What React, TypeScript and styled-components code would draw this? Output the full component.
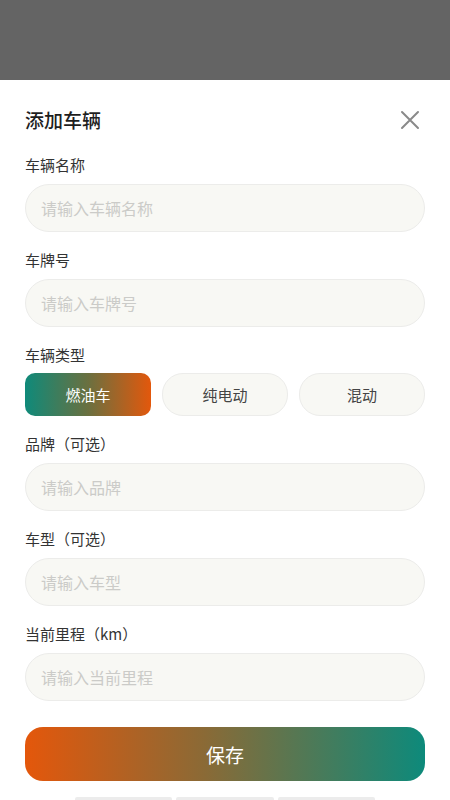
import styled, { createGlobalStyle } from "styled-components";

const GlobalStyle = createGlobalStyle`
  html, body {
    margin: 0;
    padding: 0;
    background: #646464;
    font-family: "Noto Sans CJK SC", "Noto Sans", sans-serif;
  }
  * { box-sizing: border-box; }
`;

const Page = styled.div`
  width: 450px;
  height: 800px;
  overflow: hidden;
  display: flex;
  flex-direction: column;
`;

const Backdrop = styled.div`
  height: 80px;
  flex-shrink: 0;
  background: #646464;
`;

const Sheet = styled.div`
  flex: 1;
  background: #fff;
  padding: 28px 25px 0;
  display: flex;
  flex-direction: column;
`;

const Header = styled.div`
  display: flex;
  align-items: center;
  justify-content: space-between;
  height: 24px;
  margin-bottom: 23px;
`;

const Title = styled.h1`
  margin: 0;
  font-size: 19px;
  font-weight: 500;
  color: #1e1e1e;
  line-height: 24px;
`;

const Close = styled.button`
  border: 0;
  background: none;
  padding: 0;
  margin-right: 4px;
  width: 22px;
  height: 22px;
  display: flex;
  align-items: center;
  justify-content: center;
  cursor: pointer;
`;

const Field = styled.div<{ $gap?: number }>`
  display: flex;
  flex-direction: column;
  gap: ${(p) => p.$gap ?? 9}px;
  margin-bottom: 18px;
`;

const Label = styled.label`
  font-size: 15px;
  line-height: 20px;
  color: #333;
`;

const Input = styled.input`
  height: 48px;
  width: 100%;
  border-radius: 24px;
  border: 1px solid #ececea;
  background: #f8f8f4;
  padding: 0 15px;
  font-family: inherit;
  font-size: 16px;
  color: #333;
  outline: none;
  &::placeholder {
    color: #cbcbc8;
  }
`;

const TypeRow = styled.div`
  display: grid;
  grid-template-columns: repeat(3, 1fr);
  gap: 11px;
`;

const TypeButton = styled.button<{ $active?: boolean }>`
  height: 43px;
  border-radius: ${(p) => (p.$active ? "10px" : "21px")};
  border: ${(p) => (p.$active ? "0" : "1px solid #ececea")};
  background: ${(p) =>
    p.$active ? "linear-gradient(90deg, #0f8a7a 0%, #6a7040 50%, #e3580c 100%)" : "#f8f8f4"};
  color: ${(p) => (p.$active ? "#fff" : "#444")};
  font-family: inherit;
  font-size: 15px;
  cursor: pointer;
`;

const SaveButton = styled.button`
  margin-top: 8px;
  height: 54px;
  width: 100%;
  border: 0;
  border-radius: 18px;
  background: linear-gradient(90deg, #e4570b 0%, #8a6a36 45%, #0d8a7b 100%);
  color: #fff;
  font-family: inherit;
  font-size: 19px;
  cursor: pointer;
`;

const Peek = styled.div`
  margin-top: 16px;
  padding: 0 50px;
  display: grid;
  grid-template-columns: repeat(3, 1fr);
  gap: 4px;
`;

const PeekBar = styled.div`
  height: 6px;
  background: #ececec;
  border-radius: 2px;
`;

const types = ["燃油车", "纯电动", "混动"];

const TextField: React.FC<{ label: string; placeholder: string }> = ({ label, placeholder }) => (
  <Field>
    <Label>{label}</Label>
    <Input placeholder={placeholder} />
  </Field>
);

export default function App() {
  return (
    <>
      <GlobalStyle />
      <Page>
        <Backdrop />
        <Sheet>
          <Header>
            <Title>添加车辆</Title>
            <Close aria-label="关闭">
              <svg width="20" height="20" viewBox="0 0 20 20">
                <path d="M2 2L18 18M18 2L2 18" stroke="#8a8a8a" strokeWidth="2" strokeLinecap="round" />
              </svg>
            </Close>
          </Header>
          <TextField label="车辆名称" placeholder="请输入车辆名称" />
          <TextField label="车牌号" placeholder="请输入车牌号" />
          <Field $gap={8}>
            <Label>车辆类型</Label>
            <TypeRow>
              {types.map((t, i) => (
                <TypeButton key={t} $active={i === 0}>
                  {t}
                </TypeButton>
              ))}
            </TypeRow>
          </Field>
          <TextField label="品牌（可选）" placeholder="请输入品牌" />
          <TextField label="车型（可选）" placeholder="请输入车型" />
          <TextField label="当前里程（km）" placeholder="请输入当前里程" />
          <SaveButton>保存</SaveButton>
          <Peek>
            <PeekBar />
            <PeekBar />
            <PeekBar />
          </Peek>
        </Sheet>
      </Page>
    </>
  );
}
